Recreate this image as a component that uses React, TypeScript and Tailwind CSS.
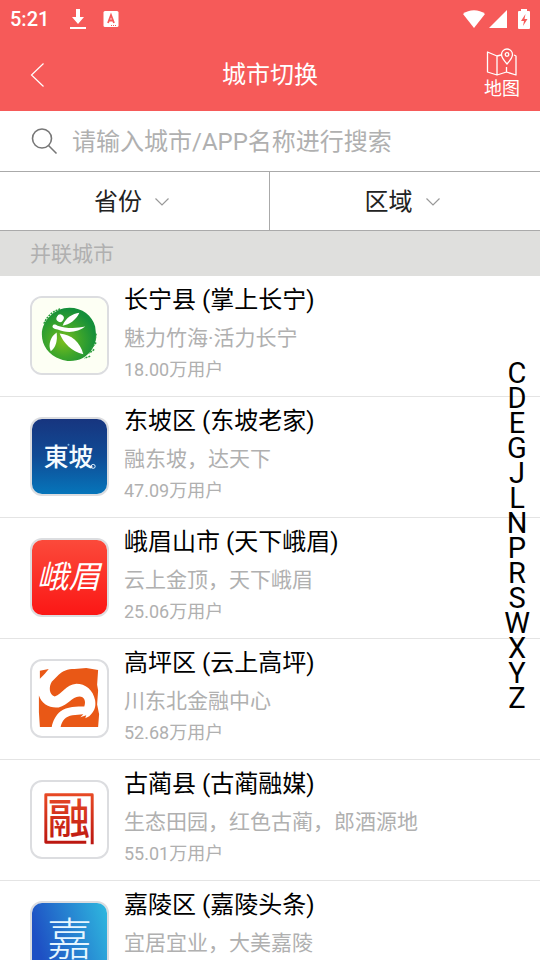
import type { ReactNode } from 'react';

type City = {
    name: string;
    slogan: string;
    users: string;
    logo: ReactNode;
};

const ChangningLogo = () => (
    <svg viewBox="0 0 76 76" className="w-full h-full" aria-hidden="true">
        <defs>
            <radialGradient id="changning" cx="0.4" cy="0.62" r="0.6">
                <stop offset="0" stopColor="#7cbf1d" />
                <stop offset="0.5" stopColor="#3fa62a" />
                <stop offset="1" stopColor="#148f3a" />
            </radialGradient>
        </defs>
        <rect width="76" height="76" fill="#fdfff4" />
        <path d="M10 37 C10 23 23 10 38 10 C51 10 61 18 64 29 L65 38 C65 48 59 57 51 61 C45 64 36 65 29 62 C17 58 10 48 10 37 Z" fill="url(#changning)" />
        <path d="M12 26 C16 17 22 13 29 11 M65 36 L64 43 M65 45 L60 51 M63 52 L58 56 M59 59 L53 61" stroke="#2b9c3c" strokeWidth="1.5" strokeDasharray="2 1" fill="none" />
        <ellipse cx="28.500" cy="20.500" rx="3.600" ry="3.900" fill="#fff" transform="rotate(30 28.500 20.500)" />
        <path d="M31 28 C34 20 41 16 48 15 C45 22 38 27 31 28 Z" fill="#fff" />
        <path d="M21 28 C22 26 24 27 26 28 C34 31 45 31 54 29 C47 35 35 36 26 32 C22 31 20 30 21 28 Z" fill="#fff" />
        <path d="M25 35 C26 44 24 50 19 54 C16 47 19 39 25 35 Z" fill="#fff" />
        <path d="M28 36 C40 37 49 45 52 57 C40 54 32 46 28 36 Z" fill="#fff" />
    </svg>
);

const DongpoLogo = () => (
    <svg viewBox="0 0 76 76" className="w-full h-full" aria-hidden="true">
        <defs>
            <linearGradient id="dongpo" x1="0" y1="0" x2="0" y2="1">
                <stop offset="0" stopColor="#17357f" />
                <stop offset="0.5" stopColor="#104b95" />
                <stop offset="1" stopColor="#0675ba" />
            </linearGradient>
        </defs>
        <rect width="76" height="76" fill="url(#dongpo)" />
        <text x="12" y="48" fontSize="25" fontWeight="500" fill="#f4fbff">東坡</text>
        <circle cx="37" cy="26" r="1" fill="#7bb7e6" />
        <circle cx="62" cy="48" r="2" fill="none" stroke="#e3f3ff" />
    </svg>
);

const EmeiLogo = () => (
    <svg viewBox="0 0 76 76" className="w-full h-full" aria-hidden="true">
        <defs>
            <linearGradient id="emei" x1="0" y1="0" x2="0" y2="1">
                <stop offset="0" stopColor="#fb4a3b" />
                <stop offset="1" stopColor="#fb1715" />
            </linearGradient>
        </defs>
        <rect width="76" height="76" fill="url(#emei)" />
        <text x="5" y="49" fontSize="32" fontWeight="400" fontStyle="italic" fill="#fff">峨眉</text>
    </svg>
);

const GaopingLogo = () => (
    <svg viewBox="0 0 76 76" className="w-full h-full" aria-hidden="true">
        <path d="M8 10 L17 8 L13 13 L8 18 Z" fill="#e95816" />
        <path d="M27 14 C31 10 36 8 43 8 L55 7 L67 9 L66 24 L67 30 L66 44 L68 54 L67 67 L29 67 C30 61 34 56 41 55 L52 54 L49 57 L55 55 L54 58 L58 56 C63 51 65 47 64 40 C62 29 54 23 45 23 C34 24 31 33 23 36 C17 34 17 26 20 21 Z" fill="#e95816" />
        <path d="M7 35 C10 44 18 48 27 47 C37 45 40 36 48 36 C53 36 55 41 53 46 C46 46 35 46 29 51 C24 55 21 61 20 67 L8 67 L7 52 Z" fill="#e95816" />
    </svg>
);

const GulinLogo = () => (
    <svg viewBox="0 0 76 76" className="w-full h-full" aria-hidden="true">
        <defs>
            <linearGradient id="gulin" x1="0" y1="0" x2="0" y2="76" gradientUnits="userSpaceOnUse">
                <stop offset="0.15" stopColor="#e84a25" />
                <stop offset="0.85" stopColor="#b9140f" />
            </linearGradient>
        </defs>
        <path d="M55 61 H14 V13 H61 V63" fill="none" stroke="url(#gulin)" strokeWidth="3" strokeLinejoin="round" />
        <text x="16" y="53" fontSize="43" fontWeight="500" fill="url(#gulin)">融</text>
    </svg>
);

const JialingLogo = () => (
    <svg viewBox="0 0 76 76" className="w-full h-full" aria-hidden="true">
        <defs>
            <linearGradient id="jialing" x1="0" y1="0.3" x2="1" y2="0">
                <stop offset="0" stopColor="#1e50c4" />
                <stop offset="1" stopColor="#2fb9df" />
            </linearGradient>
        </defs>
        <rect width="76" height="76" fill="url(#jialing)" />
        <text x="15" y="54" fontSize="46" fontWeight="300" fill="#e6f6ff">嘉</text>
    </svg>
);

const cities: City[] = [
    { name: '长宁县 (掌上长宁)', slogan: '魅力竹海·活力长宁', users: '18.00万用户', logo: <ChangningLogo /> },
    { name: '东坡区 (东坡老家)', slogan: '融东坡，达天下', users: '47.09万用户', logo: <DongpoLogo /> },
    { name: '峨眉山市 (天下峨眉)', slogan: '云上金顶，天下峨眉', users: '25.06万用户', logo: <EmeiLogo /> },
    { name: '高坪区 (云上高坪)', slogan: '川东北金融中心', users: '52.68万用户', logo: <GaopingLogo /> },
    { name: '古蔺县 (古蔺融媒)', slogan: '生态田园，红色古蔺，郎酒源地', users: '55.01万用户', logo: <GulinLogo /> },
    { name: '嘉陵区 (嘉陵头条)', slogan: '宜居宜业，大美嘉陵', users: '', logo: <JialingLogo /> },
];

const letters = ['C', 'D', 'E', 'G', 'J', 'L', 'N', 'P', 'R', 'S', 'W', 'X', 'Y', 'Z'];

const StatusBar = () => (
    <div className="h-[38px] px-[10px] flex items-center">
        <span className="text-[20px] leading-[24px] font-medium">5:21</span>
        <svg viewBox="0 0 16 22" className="w-4 h-[22px] ml-[21px]" fill="currentColor" aria-hidden="true">
            <path d="M6 1 H10 V9 H14 L8 16 L2 9 H6 Z M0 19 H16 V21 H0 Z" />
        </svg>
        <svg viewBox="0 0 16 16" className="w-4 h-4 ml-[17px]" aria-hidden="true">
            <rect x="0.500" width="15" height="16" rx="1.500" fill="#fff" />
            <path d="M5 12 L8 4 L11 12 M6 9.500 H10" stroke="#f65a59" strokeWidth="1.800" fill="none" />
            <path d="M8 14.500 H14" stroke="#f65a59" strokeDasharray="1 1" />
        </svg>
        <div className="ml-auto flex items-center">
            <svg viewBox="0 0 22 18" className="w-[22px] h-[18px]" fill="currentColor" aria-hidden="true">
                <path d="M0 4 C6 -1 16 -1 22 4 L11 18 Z" />
            </svg>
            <svg viewBox="0 0 18 18" className="w-[18px] h-[18px] ml-1" fill="currentColor" aria-hidden="true">
                <path d="M18 0 V18 H0 Z" />
            </svg>
            <svg viewBox="0 0 12 20" className="w-3 h-5 ml-[11px]" aria-hidden="true">
                <path d="M3 2 V0 H9 V2 H11 Q12 2 12 3 V19 Q12 20 11 20 H1 Q0 20 0 19 V3 Q0 2 1 2 Z" fill="#fff" />
                <path d="M7.500 5 L3 12 H6 L5 17 L9.500 10 H6.500 Z" fill="#f65a59" />
            </svg>
        </div>
    </div>
);

const Chevron = () => (
    <svg viewBox="0 0 14 8" className="w-[14px] h-2 ml-[13px]" fill="none" stroke="#999" strokeWidth="1.200" aria-hidden="true">
        <path d="M0.500 0.500 L7 7 L13.500 0.500" />
    </svg>
);

const App = () => {
    return (
        <div className="h-dvh flex flex-col overflow-hidden bg-white font-['Roboto','Noto_Sans_CJK_SC',sans-serif] font-normal">
            <header className="bg-[#f65a59] text-white shrink-0">
                <StatusBar />
                <div className="h-[73px] grid grid-cols-[1fr_auto_1fr] items-center">
                    <button type="button" aria-label="返回" className="w-16 h-12 pl-[30px]">
                        <svg viewBox="0 0 14 24" className="w-[14px] h-6" fill="none" stroke="currentColor" strokeWidth="1.200">
                            <path d="M13.500 0.500 L1.500 12 L13.500 23.500" />
                        </svg>
                    </button>
                    <h1 className="text-[24px] leading-[32px]">城市切换</h1>
                    <button type="button" className="justify-self-end mr-5 flex flex-col items-center">
                        <svg viewBox="0 0 32 28" className="w-8 h-7" fill="none" stroke="currentColor" strokeWidth="1.300" strokeLinejoin="round" aria-hidden="true">
                            <path d="M15 7 L11 8 L1.500 4 V24 L11 27 L20.500 24 L30 27 V8 L28 7 M11 8 V27 M20.500 19 V24" />
                            <path d="M21 16 C17 11.500 15.500 9 15.500 6.500 A5.500 5.500 0 0 1 26.500 6.500 C26.500 9 25 11.500 21 16 Z" />
                            <circle cx="21" cy="6.500" r="1.800" />
                        </svg>
                        <span className="text-[18px] leading-[26px]">地图</span>
                    </button>
                </div>
            </header>

            <main className="relative flex-1 min-h-0 flex flex-col">
                <label className="h-[61px] shrink-0 px-[30px] flex items-center border-b border-[#aaa]">
                    <svg viewBox="0 0 28 28" className="w-7 h-7 shrink-0" fill="none" stroke="#777" strokeWidth="1.600" aria-hidden="true">
                        <circle cx="12" cy="11.500" r="9.500" />
                        <path d="M18.500 18.500 L26.500 26.500" />
                    </svg>
                    <input
                        type="search"
                        aria-label="搜索城市"
                        placeholder="请输入城市/APP名称进行搜索"
                        className="flex-1 min-w-0 ml-[14px] h-11 pt-[2px] text-[24px] leading-[32px] text-[#111] placeholder:text-[#b0b0b0] outline-none"
                    />
                </label>

                <div className="h-[59px] shrink-0 grid grid-cols-2 border-b border-[#aaa] text-[#222]">
                    <button type="button" className="flex items-center justify-center pt-[2px] pr-[6px] text-[24px] leading-[32px] border-r border-[#aaa]">
                        省份<Chevron />
                    </button>
                    <button type="button" className="flex items-center justify-center pt-[2px] pr-[6px] text-[24px] leading-[32px]">
                        区域<Chevron />
                    </button>
                </div>

                <h2 className="h-[45px] shrink-0 px-[30px] flex items-center bg-[#dfdfdd] text-[21px] leading-[28px] text-[#b0b0b0]">并联城市</h2>

                <ul className="flex-1 min-h-0 overflow-y-auto [scrollbar-width:none]">
                    {cities.map((city) => (
                        <li key={city.name} className="h-[121px] px-[30px] flex border-b border-[#e4e4e4]">
                            <div className="w-[79px] h-[79px] mt-5 shrink-0 border-2 border-[#dcdde0] rounded-xl overflow-hidden">
                                {city.logo}
                            </div>
                            <div className="ml-[15px] pt-[7px] whitespace-nowrap">
                                <h3 className="text-[24px] leading-[34px] text-black">{city.name}</h3>
                                <p className="mt-[6px] text-[21px] leading-[30px] text-[#b0b0b0]">{city.slogan}</p>
                                <p className="mt-[5px] text-[18px] leading-[24px] text-[#b0b0b0]">{city.users}</p>
                            </div>
                        </li>
                    ))}
                </ul>

                <nav aria-label="字母索引" className="absolute inset-y-0 right-2 w-[30px] flex flex-col items-center justify-center text-[29px] leading-[25px] text-black">
                    {letters.map((letter) => (
                        <button type="button" key={letter}>{letter}</button>
                    ))}
                </nav>
            </main>
        </div>
    );
};

export default App;
